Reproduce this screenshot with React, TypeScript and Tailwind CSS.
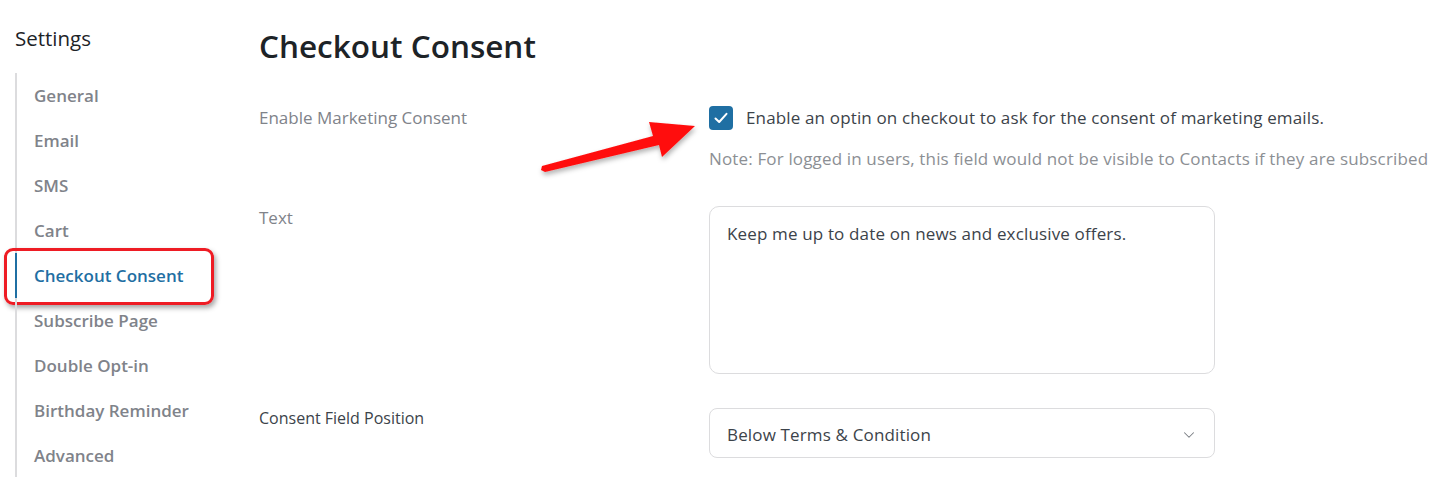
import React from "react";
import { ChevronDown } from "lucide-react";

const menu = [
  "General",
  "Email",
  "SMS",
  "Cart",
  "Checkout Consent",
  "Subscribe Page",
  "Double Opt-in",
  "Birthday Reminder",
  "Advanced",
];

const font = { fontFamily: '"Open Sans", "Noto Sans", sans-serif' };

function Sidebar() {
  return (
    <aside className="w-[259px] shrink-0 pl-[15px] pt-[24px]">
      <h2 className="text-[20.5px] leading-[28px] font-medium text-[#1d2327]">Settings</h2>
      <ul className="mt-[21px]">
        {menu.map((item) => {
          const active = item === "Checkout Consent";
          return (
            <li
              key={item}
              className={
                "relative h-[45px] flex items-center pl-[17px] border-l-2 text-[17px] font-semibold " +
                (active ? "border-[#1f6fa3] text-[#1f6fa3]" : "border-[#dcdcde] text-[#80838a]")
              }
            >
              {item}
              {active && (
                <span className="absolute left-[-13px] top-[-5px] w-[210px] h-[57px] rounded-[9px] border-[3px] border-[#ee1c24] shadow-[2px_3px_5px_rgba(0,0,0,0.35)]" />
              )}
            </li>
          );
        })}
      </ul>
    </aside>
  );
}

function Arrow() {
  return (
    <svg className="absolute left-0 top-0 pointer-events-none" width="1437" height="477">
      <defs>
        <filter id="sh" x="-20%" y="-20%" width="140%" height="160%">
          <feDropShadow dx="1" dy="3" stdDeviation="2.5" floodColor="#000" floodOpacity="0.3" />
        </filter>
      </defs>
      <polygon
        points="541,170 542,166 653,136 649,122 695,126 662,157 659,145 545,172"
        fill="#ff1010"
        filter="url(#sh)"
      />
    </svg>
  );
}

export default function App() {
  return (
    <div className="relative w-[1437px] h-[477px] overflow-hidden bg-white flex" style={font}>
      <Sidebar />
      <main className="pt-[24px]">
        <h1 className="text-[31.5px] leading-[44px] font-semibold text-[#1d2327]">Checkout Consent</h1>

        <div className="mt-[38px] flex">
          <div className="w-[450px] text-[17px] leading-[24px] text-[#80838a]">Enable Marketing Consent</div>
          <div>
            <div className="flex items-center gap-[13px]">
              <span className="w-[24px] h-[24px] rounded-[4px] bg-[#1f6fa3] flex items-center justify-center">
                <svg width="18" height="18" viewBox="0 0 18 18" fill="none">
                  <path d="M3.5 9.5 L7.2 13 L14.5 4.8" stroke="white" strokeWidth="2" strokeLinecap="round" strokeLinejoin="round" />
                </svg>
              </span>
              <span className="text-[17px] leading-[24px] tracking-[0.15px] text-[#3c434a] whitespace-nowrap">
                Enable an optin on checkout to ask for the consent of marketing emails.
              </span>
            </div>
            <p className="mt-[17px] text-[17px] leading-[24px] tracking-[0.15px] text-[#8c8f94] whitespace-nowrap">
              Note: For logged in users, this field would not be visible to Contacts if they are subscribed
            </p>
          </div>
        </div>

        <div className="mt-[35px] flex">
          <div className="w-[450px] text-[17px] leading-[24px] text-[#80838a]">Text</div>
          <div className="w-[506px] h-[168px] rounded-[10px] border border-[#dcdcde] px-[17px] pt-[15px] text-[17px] leading-[24px] tracking-[0.15px] text-[#3c434a]">
            Keep me up to date on news and exclusive offers.
          </div>
        </div>

        <div className="mt-[34px] flex">
          <div className="w-[450px] -mt-[2px] text-[16px] leading-[24px] text-[#3c434a]">Consent Field Position</div>
          <div className="w-[506px] h-[50px] rounded-[8px] border border-[#dcdcde] pl-[17px] pr-[16px] pt-[3px] flex items-center justify-between text-[17px] tracking-[0.15px] text-[#3c434a]">
            <span>Below Terms &amp; Condition</span>
            <ChevronDown className="w-[18px] h-[18px] text-[#787c82]" strokeWidth={1.4} />
          </div>
        </div>
      </main>
      <Arrow />
    </div>
  );
}
